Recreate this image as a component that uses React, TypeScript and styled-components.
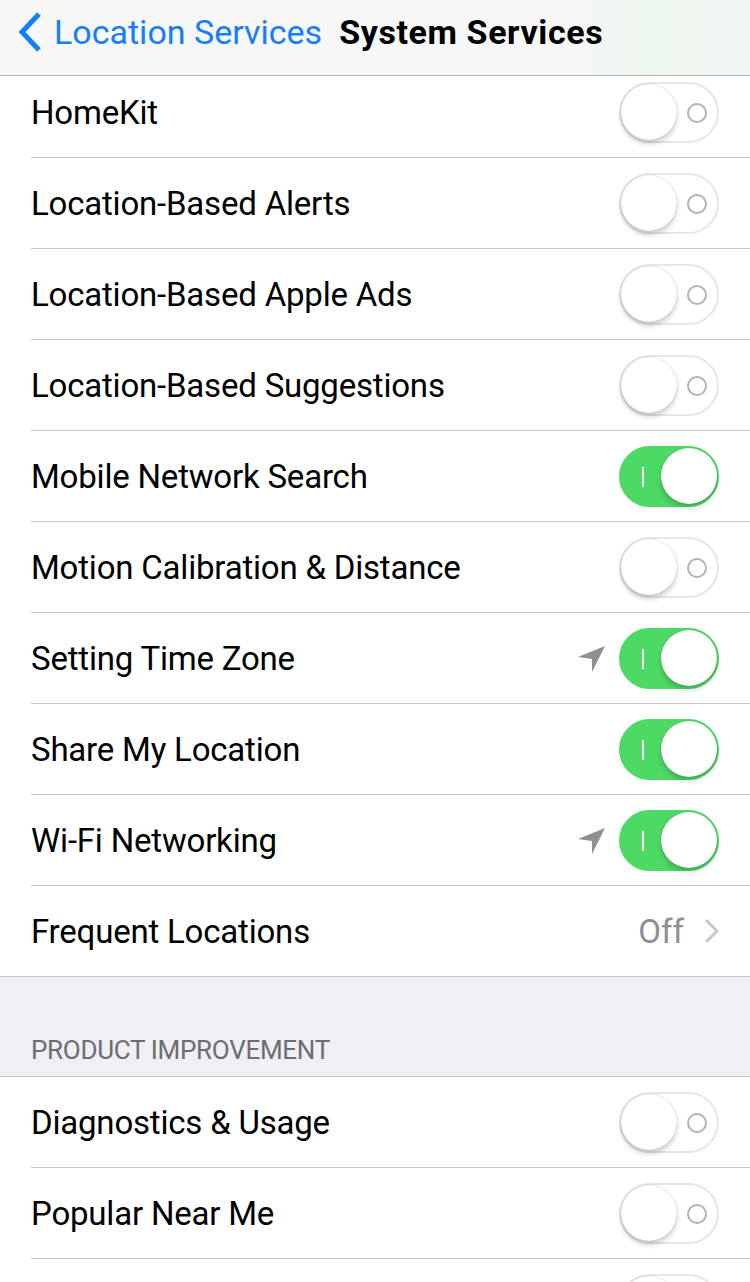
import React from "react";
import styled, { createGlobalStyle } from "styled-components";

const GlobalStyle = createGlobalStyle`
    body {
        margin: 0;
        background: #efeff4;
        font-family: Roboto, "Noto Sans", sans-serif;
        -webkit-font-smoothing: antialiased;
    }
`

const Page = styled.div`
    width: 750px;
    height: 1282px;
    overflow: hidden;
    background: #efeff4;
`
const NavBar = styled.div`
    height: 76px;
    display: flex;
    align-items: center;
    padding-left: 17px;
    padding-bottom: 12px;
    box-sizing: border-box;
    border-bottom: 1px solid #b2b2b2;
    background: linear-gradient(90deg, #f7f7f7 0%, #f7f7f7 74%, #eef7ef 86%, #f3f7f3 100%);
`
const BackButton = styled.div`
    display: flex;
    align-items: center;
    color: #147efb;
    font-size: 34px;
    gap: 11px;
`
const Title = styled.div`
    margin-left: 17px;
    font-size: 34px;
    font-weight: 700;
    letter-spacing: 0.6px;
    color: #000;
`
const Group = styled.div`
    background: #fff;
    border-bottom: 1px solid #c8c7cc;
`
const TopGroup = styled(Group)`
    border-top: 1px solid #c8c7cc;
`
const Row = styled.div<{ $cut?: boolean }>`
    height: ${p => (p.$cut ? "81px" : "90px")};
    padding-bottom: ${p => (p.$cut ? "9px" : "0")};
    box-sizing: border-box;
    margin-left: 31px;
    padding-right: 31px;
    display: flex;
    align-items: center;
    & + & {
        border-top: 1px solid #c8c7cc;
        height: 91px;
    }
`
const Label = styled.div`
    flex: 1;
    font-size: 33px;
    letter-spacing: -0.2px;
    color: #000;
`
const Arrow = styled.svg`
    width: 30px;
    height: 28px;
    margin-right: 12px;
    margin-top: 2px;
`
const Track = styled.div<{ $on: boolean }>`
    position: relative;
    width: 100px;
    height: 61px;
    box-sizing: border-box;
    border-radius: 31px;
    background: ${p => (p.$on ? "#4cd964" : "#fff")};
    border: 2px solid ${p => (p.$on ? "#4cd964" : "#e6e6e9")};
`
const Knob = styled.div<{ $on: boolean }>`
    position: absolute;
    top: 0.5px;
    left: ${p => (p.$on ? "40px" : "0px")};
    width: 56px;
    height: 56px;
    border-radius: 50%;
    background: #fff;
    box-shadow: 0 4px 5px rgba(0, 0, 0, 0.18), 0 0 1px rgba(0, 0, 0, 0.35);
`
const OnMark = styled.div`
    position: absolute;
    left: 21px;
    top: 19px;
    width: 2px;
    height: 20px;
    background: #fff;
`
const OffMark = styled.div`
    position: absolute;
    left: 66px;
    top: 19px;
    width: 20px;
    height: 20px;
    box-sizing: border-box;
    border-radius: 50%;
    border: 2px solid #b3b3b3;
`
const Detail = styled.div`
    font-size: 33px;
    color: #8e8e93;
    margin-right: 20px;
`
const SectionHeader = styled.div`
    height: 99px;
    box-sizing: border-box;
    padding: 0 31px 11px;
    display: flex;
    align-items: flex-end;
    font-size: 26px;
    letter-spacing: -0.3px;
    color: #6d6d72;
`

type Item = { label: string; on?: boolean; located?: boolean; detail?: string };

const systemItems: Item[] = [
    { label: "HomeKit" },
    { label: "Location-Based Alerts" },
    { label: "Location-Based Apple Ads" },
    { label: "Location-Based Suggestions" },
    { label: "Mobile Network Search", on: true },
    { label: "Motion Calibration & Distance" },
    { label: "Setting Time Zone", on: true, located: true },
    { label: "Share My Location", on: true },
    { label: "Wi-Fi Networking", on: true, located: true },
    { label: "Frequent Locations", detail: "Off" },
];

// the last row is scrolled past the bottom edge, only its switch shows
const productItems: Item[] = [
    { label: "Diagnostics & Usage" },
    { label: "Popular Near Me" },
    { label: "" },
];

function Toggle({ on }: { on: boolean }) {
    return (
        <Track $on={on}>
            {on ? <OnMark /> : <OffMark />}
            <Knob $on={on} />
        </Track>
    )
}

function SettingRow({ item, cut }: { item: Item; cut?: boolean }) {
    return (
        <Row $cut={cut}>
            <Label>{item.label}</Label>
            {item.located && (
                <Arrow viewBox="0 0 30 28">
                    <polygon points="28,1 1,12 15,14 15,27" fill="#8e8e93" />
                </Arrow>
            )}
            {item.detail ? (
                <>
                    <Detail>{item.detail}</Detail>
                    <svg width="15" height="26" viewBox="0 0 15 26">
                        <polyline points="2,2 13,13 2,24" fill="none" stroke="#c7c7cc" strokeWidth="3" />
                    </svg>
                </>
            ) : (
                <Toggle on={!!item.on} />
            )}
        </Row>
    )
}

function App() {
    return (
        <Page>
            <GlobalStyle />
            <NavBar>
                <BackButton>
                    <svg width="26" height="42" viewBox="0 0 26 42">
                        <polyline points="22,3 5,21 22,39" fill="none" stroke="#147efb" strokeWidth="5" />
                    </svg>
                    Location Services
                </BackButton>
                <Title>System Services</Title>
            </NavBar>
            <Group>
                {systemItems.map((item, i) => (
                    <SettingRow key={i} item={item} cut={i === 0} />
                ))}
            </Group>
            <SectionHeader>PRODUCT IMPROVEMENT</SectionHeader>
            <TopGroup>
                {productItems.map((item, i) => (
                    <SettingRow key={i} item={item} />
                ))}
            </TopGroup>
        </Page>
    )
}

export default App;
